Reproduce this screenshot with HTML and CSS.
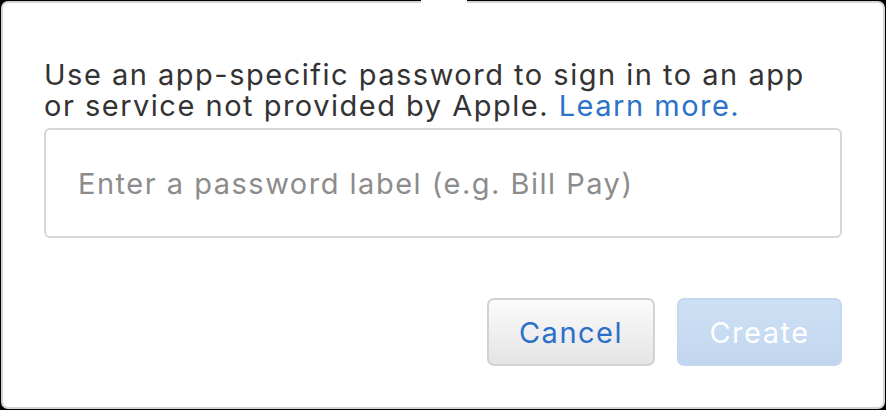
FILE: index.html
```html
<!DOCTYPE html>
<html lang="en">
<head>
    <meta charset="UTF-8">
    <title>App-Specific Password</title>
    <link rel="stylesheet" href="styles.css">
</head>
<body>
    <div class="popover">
        <div class="arrow"></div>
        <p class="intro">Use an app-specific password to sign in to an app or service not provided by Apple. <a href="#">Learn more.</a></p>
        <input class="label-input" type="text" placeholder="Enter a password label (e.g. Bill Pay)">
        <div class="actions">
            <button class="btn btn-cancel">Cancel</button>
            <button class="btn btn-create" disabled>Create</button>
        </div>
    </div>
</body>
</html>
```

FILE: styles.css
```css
html, body {
    margin: 0;
    padding: 0;
}

body {
    width: 886px;
    height: 410px;
    background-color: #000;
    padding: 1px;
    box-sizing: border-box;
    font-family: Inter, "Noto Sans", sans-serif;
}

.popover {
    position: relative;
    height: 100%;
    box-sizing: border-box;
    background-color: #fff;
    border: 2px solid #d4d4d6;
    border-radius: 7px;
    padding: 56px 41px 0 41px;
}

.arrow {
    position: absolute;
    top: -3px;
    left: 418px;
    width: 46px;
    height: 4px;
    background-color: #fff;
}

.intro {
    margin: 0;
    max-width: 790px;
    font-size: 29px;
    line-height: 31px;
    color: #333;
    letter-spacing: 1.5px;
}

.intro a {
    color: #2a73c9;
    text-decoration: none;
}

.label-input {
    display: block;
    margin-top: 7px;
    width: 100%;
    height: 110px;
    box-sizing: border-box;
    border: 2px solid #d6d6d6;
    border-radius: 6px;
    padding: 0 32px;
    font-family: inherit;
    font-size: 29px;
    letter-spacing: 1.5px;
    color: #333;
    outline: none;
}

.label-input::placeholder {
    color: #8c8c8c;
}

.actions {
    display: flex;
    justify-content: flex-end;
    gap: 22px;
    margin-top: 60px;
}

.btn {
    height: 68px;
    border-radius: 7px;
    font-family: inherit;
    font-size: 29px;
    letter-spacing: 1.5px;
    padding: 0;
}

.btn-cancel {
    width: 168px;
    color: #2a6fc9;
    border: 2px solid #d2d2d2;
    background: linear-gradient(#fbfbfb, #e4e4e4);
}

.btn-create {
    width: 165px;
    color: #fff;
    border: 2px solid #c3d8f0;
    background: linear-gradient(#cde0f5, #c1d6ee);
}
```
